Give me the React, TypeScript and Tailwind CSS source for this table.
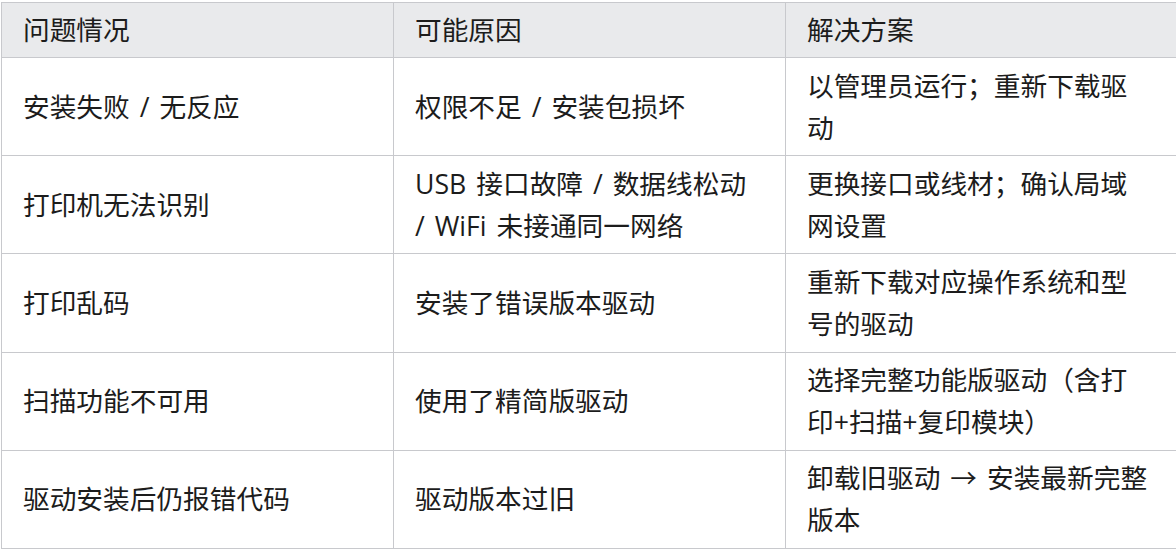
const rows: [string, string, string][] = [
  ["安装失败 / 无反应", "权限不足 / 安装包损坏", "以管理员运行；重新下载驱动"],
  ["打印机无法识别", "USB 接口故障 / 数据线松动 / WiFi 未接通同一网络", "更换接口或线材；确认局域网设置"],
  ["打印乱码", "安装了错误版本驱动", "重新下载对应操作系统和型号的驱动"],
  ["扫描功能不可用", "使用了精简版驱动", "选择完整功能版驱动（含打印+扫描+复印模块）"],
  ["驱动安装后仍报错代码", "驱动版本过旧", "卸载旧驱动 → 安装最新完整版本"],
];

const headers = ["问题情况", "可能原因", "解决方案"];

export default function App() {
  return (
    <div
      className="w-[1176px] h-[550px] overflow-hidden bg-white pl-px pt-[2px] text-[#1c1c1c]"
      style={{ fontFamily: '"Open Sans", "Noto Sans CJK SC", sans-serif' }}
    >
      <table className="w-[1177px] table-fixed border-collapse text-[26.7px] leading-[42px] [word-spacing:3px]">
        <colgroup>
          <col className="w-[392px]" />
          <col className="w-[392px]" />
          <col className="w-[392px]" />
        </colgroup>
        <thead>
          <tr className="bg-[#e9eaec]">
            {headers.map((h) => (
              <th
                key={h}
                className="border border-[#c8c9cd] pl-[21px] pr-[24px] py-[6px] text-left font-normal align-middle"
              >
                {h}
              </th>
            ))}
          </tr>
        </thead>
        <tbody>
          {rows.map((r) => (
            <tr key={r[0]}>
              {r.map((c, i) => (
                <td
                  key={i}
                  className={`border border-[#c8c9cd] pl-[21px] py-[6.6px] align-middle ${
                    i === 1 ? "pr-[34px]" : "pr-[24px]"
                  }`}
                >
                  {c}
                </td>
              ))}
            </tr>
          ))}
        </tbody>
      </table>
    </div>
  );
}
